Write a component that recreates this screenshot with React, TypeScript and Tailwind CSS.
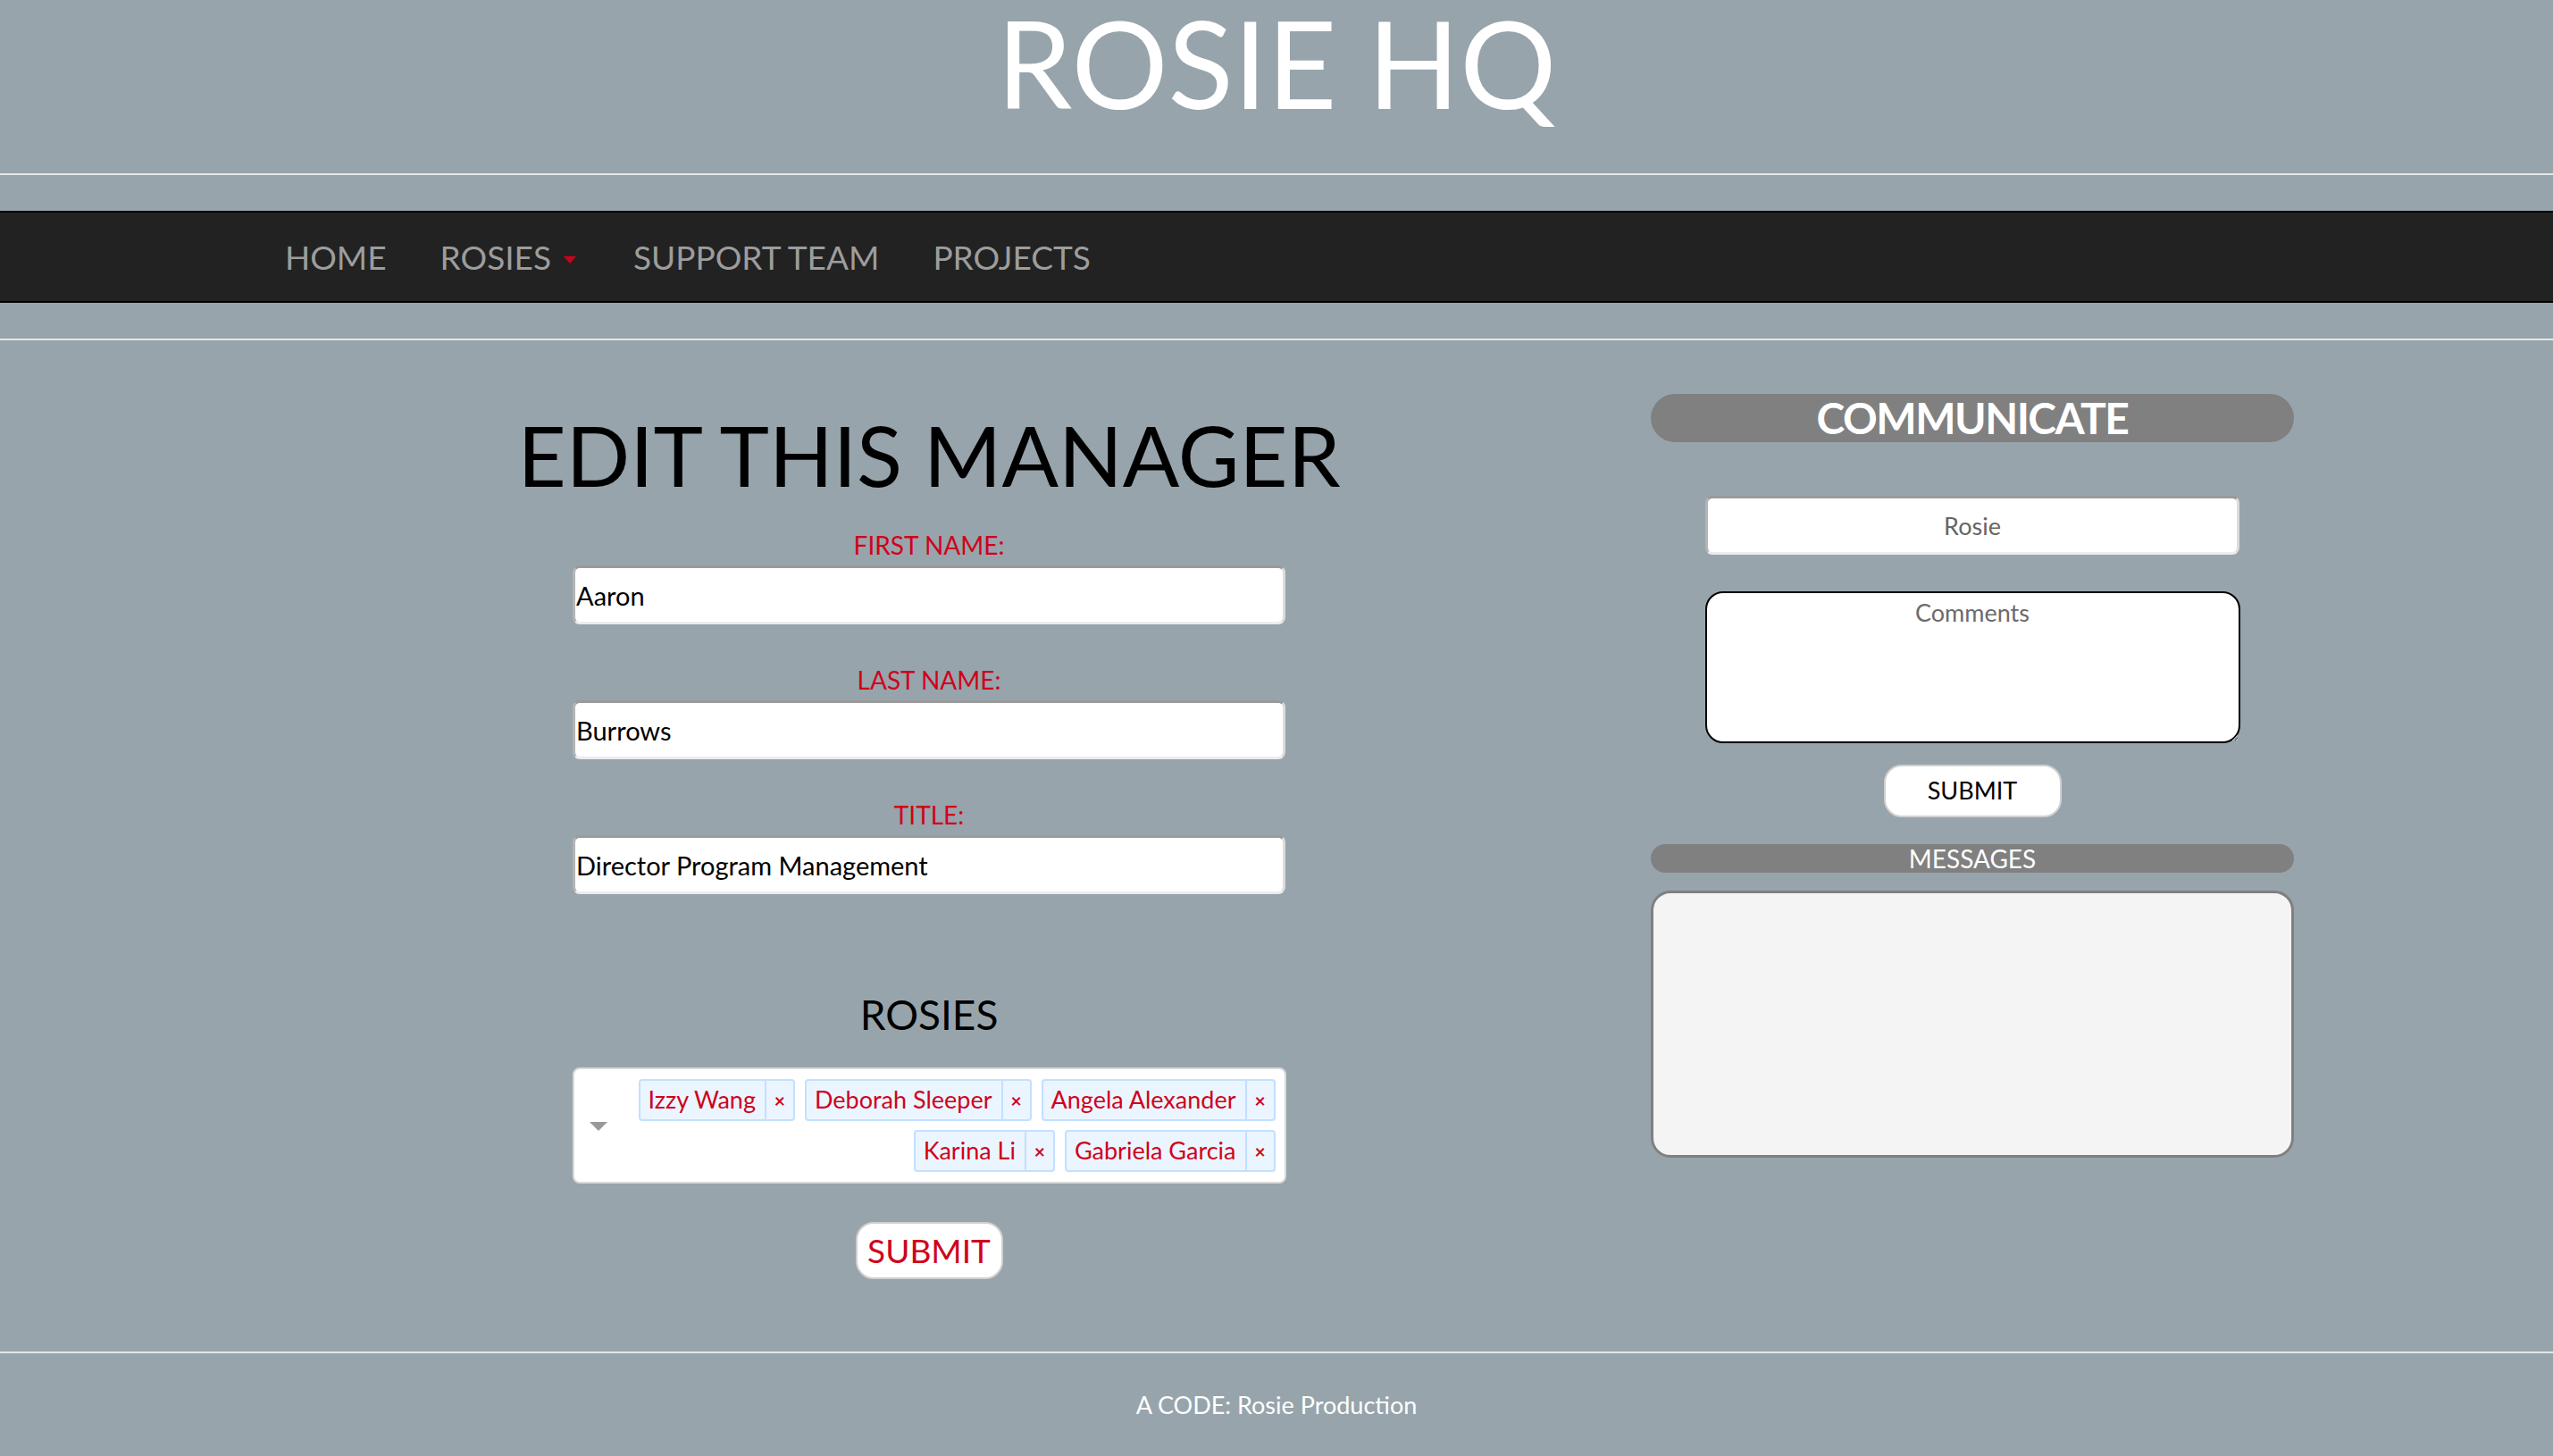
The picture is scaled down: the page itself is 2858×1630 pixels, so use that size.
import React from "react";

const rosies = [
  ["Izzy Wang", "Deborah Sleeper", "Angela Alexander"],
  ["Karina Li", "Gabriela Garcia"],
];

const inputBase =
  "h-[66px] rounded-lg border-[3px] border-t-[#9a9a9a] border-l-[#b5b5b5] border-b-[#ececec] border-r-[#dcdcdc] bg-white px-[1px] outline-none";

const Tag = ({ name }: { name: string }) => (
  <div className="flex h-[47px] items-stretch rounded-[4px] border-2 border-[#c2e0ff] bg-[#ebf5ff] text-[#d0021b]">
    <span className="flex items-center pl-[9px] pr-[10px] text-[27px]">{name}</span>
    <span className="flex w-[32px] items-center justify-center border-l-2 border-[#c2e0ff] text-[21px] font-bold">
      ×
    </span>
  </div>
);

const Field = ({ label, value }: { label: string; value: string }) => (
  <div className="flex w-[798px] flex-col items-center">
    <label className="mb-[9px] text-[28px] leading-none text-[#d0021b]">{label}</label>
    <input className={`${inputBase} w-full text-[29px] text-black`} defaultValue={value} />
  </div>
);

const App = () => {
  return (
    <div className="min-h-screen bg-[#97a4ab] font-['Lato',_'Open_Sans',_sans-serif]">
      <header className="h-[194px] pt-[3px]">
        <h1 className="text-center text-[135px] leading-none text-white">ROSIE HQ</h1>
      </header>
      <hr className="h-[2px] border-0 bg-[#e6e6e6]" />

      <nav className="mt-[40px] flex h-[103px] items-center border-y-2 border-black bg-[#222222]">
        <ul className="ml-[289px] flex items-center text-[37px] text-[#9d9d9d]">
          <li className="px-[30px]">HOME</li>
          <li className="flex items-center pl-[30px] pr-[34px]">
            ROSIES
            <span className="ml-[14px] mt-[6px] h-0 w-0 border-x-[7px] border-t-[8px] border-x-transparent border-t-[#d0021b]" />
          </li>
          <li className="px-[30px]">SUPPORT TEAM</li>
          <li className="px-[30px]">PROJECTS</li>
        </ul>
      </nav>

      <hr className="mt-[40px] h-[2px] border-0 bg-[#e6e6e6]" />

      <main className="ml-[540px] grid h-[1132px] grid-cols-[1000px_720px] gap-x-[308px]">
        <section className="flex flex-col items-center">
          <h2 className="mt-[81px] text-[94px] leading-none text-black">EDIT THIS MANAGER</h2>
          <div className="mt-[40px] flex flex-col items-center gap-[48px]">
            <Field label="FIRST NAME:" value="Aaron" />
            <Field label="LAST NAME:" value="Burrows" />
            <Field label="TITLE:" value="Director Program Management" />
          </div>

          <h3 className="mt-[112px] text-[46px] leading-none text-black">ROSIES</h3>
          <div className="mt-[36px] flex h-[130px] w-[799px] items-center rounded-lg border-2 border-[#d9d9d9] bg-white">
            <span className="ml-[17px] mt-[2px] h-0 w-0 border-x-[10px] border-t-[10px] border-x-transparent border-t-[#999999]" />
            <div className="ml-auto mr-[10px] flex flex-col items-end gap-[10px]">
              {rosies.map((row, i) => (
                <div key={i} className="flex gap-[11px]">
                  {row.map((n) => (
                    <Tag key={n} name={n} />
                  ))}
                </div>
              ))}
            </div>
          </div>

          <button className="mt-[43px] h-[64px] w-[165px] rounded-[20px] border-2 border-[#d0d0d0] bg-white text-[37px] text-[#d0021b]">
            SUBMIT
          </button>
        </section>

        <aside className="flex flex-col items-center">
          <div className="mt-[60px] flex h-[54px] w-full items-center justify-center rounded-full bg-[#808080] text-[48px] font-bold leading-none tracking-[-1.5px] text-white">
            COMMUNICATE
          </div>
          <input
            className={`${inputBase} mt-[60px] w-[598px] text-center text-[27px] text-[#666666]`}
            defaultValue="Rosie"
          />
          <textarea
            className="mt-[41px] h-[170px] w-[599px] rounded-[20px] border-2 border-black bg-white pt-[2px] text-center text-[27px] outline-none placeholder:text-[#6b6b6b]"
            placeholder="Comments"
          />
          <button className="mt-[24px] h-[59px] w-[199px] rounded-[20px] border-2 border-[#d0d0d0] bg-white text-[27px] text-black">
            SUBMIT
          </button>
          <div className="mt-[30px] flex h-[32px] w-full items-center justify-center rounded-full bg-[#808080] text-[28px] leading-none text-white">
            MESSAGES
          </div>
          <div className="mt-[20px] h-[299px] w-full rounded-[22px] border-[3px] border-[#808080] bg-[#f4f4f4]" />
        </aside>
      </main>

      <hr className="h-[2px] border-0 bg-[#e6e6e6]" />
      <footer className="pt-[44px] text-center text-[27px] leading-none text-white">
        A CODE: Rosie Production
      </footer>
    </div>
  );
};

export default App;
